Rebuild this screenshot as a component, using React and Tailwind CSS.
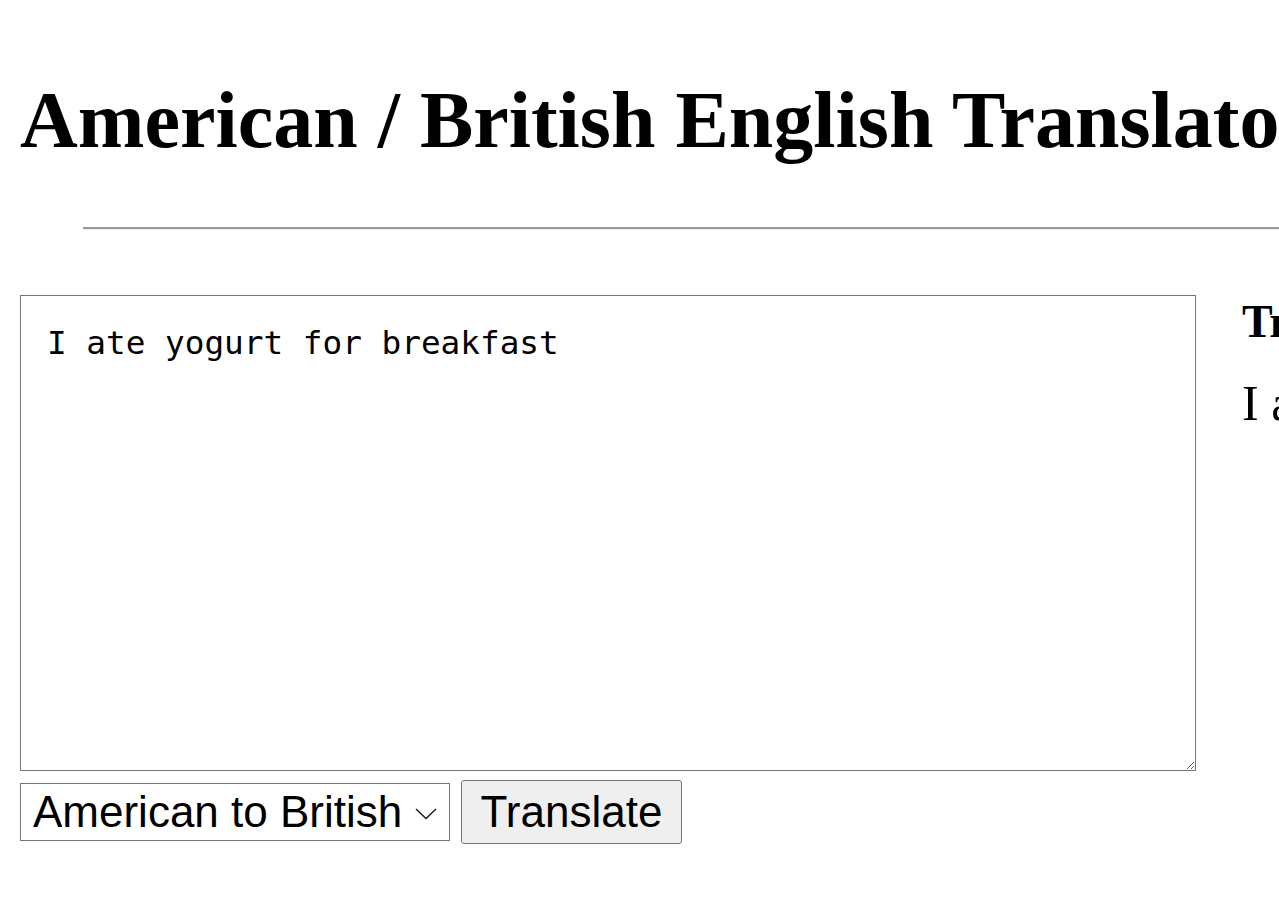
import React, { useState } from "react";

const Translator = () => {
  const [text, setText] = useState("I ate yogurt for breakfast");
  const [locale, setLocale] = useState("american-to-british");

  return (
    <div className="w-full overflow-hidden bg-white text-black px-[20px] pb-[60px] font-['Liberation_Serif',serif]">
      <h1 className="pt-[80px] text-[80px] leading-[80px] font-bold whitespace-nowrap">
        American / British English Translator
      </h1>
      <hr className="ml-[63px] mt-[67px] w-[1400px] border-0 border-t-2 border-t-[#999999] border-b border-b-[#ebebeb]" />

      <div className="flex gap-[46px] mt-[65px] w-[2000px]">
        <div className="shrink-0">
          <textarea
            value={text}
            onChange={(e) => setText(e.target.value)}
            className="block w-[1176px] h-[476px] border border-[#767676] bg-white pt-[28px] pl-[26px] pr-[25px] text-[32.7px] leading-[38px] font-['DejaVu_Sans_Mono',monospace] outline-none"
          />
          <div className="flex items-center gap-[11px] mt-[9px] font-['Liberation_Sans',Arial,sans-serif]">
            <div className="relative">
              <select
                value={locale}
                onChange={(e) => setLocale(e.target.value)}
                className="appearance-none w-[430px] h-[58px] border border-[#767676] bg-white pl-[12px] text-[44px] leading-[56px] text-black outline-none"
              >
                <option value="american-to-british">American to British</option>
                <option value="british-to-american">British to American</option>
              </select>
              <svg
                className="absolute right-[13px] top-[25px] pointer-events-none"
                width="22"
                height="12"
                viewBox="0 0 22 12"
                fill="none"
              >
                <polyline points="1,1 11,10.5 21,1" stroke="#1a1a1a" strokeWidth="1.4" />
              </svg>
            </div>
            <button className="w-[221px] h-[64px] bg-[#efefef] border border-[#767676] rounded-[3px] text-[44px] leading-[62px] text-black">
              Translate
            </button>
          </div>
        </div>

        <div className="shrink-0 whitespace-nowrap">
          <h3 className="mt-[4px] text-[46px] leading-[46px] font-bold">Translated Sentence:</h3>
          <p className="mt-[33px] text-[50px] leading-[50px]">I ate yoghurt for breakfast.</p>
        </div>
      </div>
    </div>
  );
};

export default function App() {
  return <Translator />;
}
